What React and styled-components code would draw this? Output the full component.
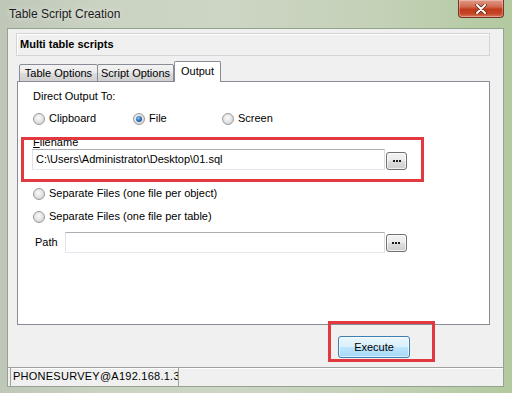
import React from 'react';
import styled, { createGlobalStyle } from 'styled-components';

const Global = createGlobalStyle`
  html, body { margin: 0; padding: 0; }
  body {
    width: 512px; height: 393px; overflow: hidden;
    font-family: "Liberation Sans", Arial, sans-serif;
    font-size: 11px; color: #000;
  }
  #root { width: 512px; height: 393px; }
`;

const Window = styled.div`
  width: 512px; height: 393px; box-sizing: border-box;
  display: flex; flex-direction: column;
  padding: 0 8px 6px 7px;
  background: linear-gradient(90deg, #bfc7b9 0%, #cad2c2 20%, #cdd5c4 45%, #c3d1b6 75%, #b2c99f 100%);
`;

const TitleBar = styled.div`
  height: 28px; flex: none;
  display: flex; align-items: flex-start; justify-content: space-between;
`;

const Title = styled.div`
  margin: 6px 0 0 2px;
  font-size: 12px; line-height: 16px; color: #1c1c1c;
  text-shadow: 0 0 6px rgba(255,255,255,0.8);
`;

const CloseButton = styled.div`
  width: 46px; height: 18px; box-sizing: border-box;
  border: 1px solid #7a3322; border-top: none;
  border-radius: 0 0 4px 4px;
  background: linear-gradient(180deg, #e29a88 0%, #d16a50 40%, #c03a1a 55%, #c44527 80%, #d8795b 100%);
  box-shadow: inset 0 0 0 1px rgba(255,255,255,0.3);
  display: flex; align-items: center; justify-content: center;
`;

const Client = styled.div`
  position: relative;
  flex: 1; display: flex; flex-direction: column;
  background: #f0f0f0;
  border: 1px solid #93a38d;
`;

const Header = styled.div`
  margin: 4px 13px 0 8px; height: 23px; box-sizing: border-box;
  border: 1px solid #d4d4d4;
  box-shadow: inset 1px 1px 0 #ffffff;
  font-weight: bold; line-height: 21px;
  padding-left: 3px;
`;

const TabStrip = styled.div`
  margin: 5px 0 -1px 11px; height: 21px;
  display: flex; align-items: flex-end;
  position: relative; z-index: 1;
`;

const Tab = styled.div`
  box-sizing: border-box;
  width: ${p => p.$w}px;
  height: ${p => (p.$active ? 21 : 18)}px;
  margin-left: ${p => p.$ml || 0}px;
  border: 1px solid #898c95;
  border-bottom: ${p => (p.$active ? 'none' : '1px solid #898c95')};
  border-radius: 2px 2px 0 0;
  background: ${p => (p.$active ? '#ffffff' : 'linear-gradient(180deg, #f3f3f3 0%, #ebebeb 50%, #dddddd 51%, #cfcfcf 100%)')};
  text-align: center;
  line-height: ${p => (p.$active ? 18 : 16)}px;
  color: #000;
`;

const TabPanel = styled.div`
  margin-left: 9px; width: 473px; height: 244px; box-sizing: border-box;
  background: #ffffff;
  border: 1px solid #898c95;
  padding: 8px 0 0 15px;
  display: flex; flex-direction: column;
`;

const Label = styled.div`
  line-height: 13px; height: 13px;
  margin-top: ${p => p.$mt || 0}px;
  margin-left: ${p => p.$ml || 0}px;
`;

const Row = styled.div`
  display: flex; align-items: ${p => p.$align || 'center'};
  margin-top: ${p => p.$mt || 0}px;
`;

const RadioItem = styled.div`
  display: flex; align-items: center;
  width: ${p => (p.$w ? `${p.$w}px` : 'auto')};
  height: 13px; line-height: 13px;
`;

const RadioCircle = styled.span`
  width: 12px; height: 12px; box-sizing: border-box; flex: none;
  border-radius: 50%;
  border: 1px solid #9a9a9a;
  background: radial-gradient(circle at 45% 40%, #fbfbfb 0%, #e6e6e6 45%, #c9c9c9 100%);
  margin-right: 4px;
  display: flex; align-items: center; justify-content: center;
  &::after {
    content: '';
    display: ${p => (p.$checked ? 'block' : 'none')};
    width: 6px; height: 6px; border-radius: 50%;
    background: radial-gradient(circle at 40% 35%, #8cc6f5 0%, #2d6fc1 50%, #163c7a 100%);
  }
`;

const TextBox = styled.div`
  width: ${p => p.$w}px; height: 21px; box-sizing: border-box;
  margin-left: ${p => p.$ml || 0}px;
  border: 1px solid;
  border-color: #abadb3 #dbdfe6 #e3e9ef #e2e3ea;
  background: #fff;
  padding-left: 3px;
  line-height: 19px;
  white-space: nowrap; overflow: hidden;
`;

const DotsButton = styled.div`
  width: 21px; height: 18px; box-sizing: border-box;
  margin-left: 1px;
  border: 1px solid #707070; border-radius: 3px;
  background: linear-gradient(180deg, #f2f2f2 0%, #ebebeb 50%, #dddddd 51%, #cfcfcf 100%);
  box-shadow: inset 0 0 0 1px rgba(255,255,255,0.7);
  display: flex; align-items: center; justify-content: center; gap: 1px;
`;

const Dot = styled.span`
  width: 2px; height: 2px; background: #1a1a1a;
`;

const Footer = styled.div`
  height: 42px; flex: none; box-sizing: border-box;
  padding: 11px 0 0 330px;
`;

const ExecuteButton = styled.div`
  width: 72px; height: 22px; box-sizing: border-box;
  border: 1px solid #3c7fb1; border-radius: 3px;
  background: linear-gradient(180deg, #eaf6fd 0%, #d9f0fc 50%, #bee6fd 51%, #a7d9f5 100%);
  box-shadow: inset 0 0 0 1px rgba(255,255,255,0.6);
  text-align: center; line-height: 20px;
`;

const StatusBar = styled.div`
  flex: 1; display: flex;
  border-top: 1px solid #a0a0a0;
  box-shadow: inset 0 1px 0 #ffffff;
`;

const StatusPanel = styled.div`
  width: 169px; box-sizing: border-box;
  margin-left: 2px;
  border-left: 1px solid #a0a0a0; border-right: 1px solid #a0a0a0;
  padding-left: 2px;
  line-height: 17px;
  white-space: nowrap; overflow: hidden;
  font-size: 11px; letter-spacing: 0.25px;
`;

const Annotation = styled.div`
  position: absolute; box-sizing: border-box;
  left: ${p => p.$x}px; top: ${p => p.$y}px;
  width: ${p => p.$w}px; height: ${p => p.$h}px;
  border: 3px solid #e2383f;
  pointer-events: none;
`;

const Radio = ({ checked, w, children }) => (
  <RadioItem $w={w}>
    <RadioCircle $checked={checked} />
    <span>{children}</span>
  </RadioItem>
);

const Browse = () => (
  <DotsButton>
    <Dot /><Dot /><Dot />
  </DotsButton>
);

export default function App() {
  return (
    <>
      <Global />
      <Window>
        <TitleBar>
          <Title>Table Script Creation</Title>
          <CloseButton>
            <svg width="12" height="10" viewBox="0 0 12 10">
              <path d="M2 1 L10 9 M10 1 L2 9" stroke="#5a2418" strokeWidth="3.4" strokeLinecap="round" />
              <path d="M2 1 L10 9 M10 1 L2 9" stroke="#ffffff" strokeWidth="2" strokeLinecap="round" />
            </svg>
          </CloseButton>
        </TitleBar>
        <Client>
          <Header>Multi table scripts</Header>
          <TabStrip>
            <Tab $w={79}>Table Options</Tab>
            <Tab $w={77} $ml={-1}>Script Options</Tab>
            <Tab $w={47} $ml={0} $active>Output</Tab>
          </TabStrip>
          <TabPanel>
            <Label>Direct Output To:</Label>
            <Row $mt={9}>
              <Radio w={100}>Clipboard</Radio>
              <Radio w={89} checked>File</Radio>
              <Radio>Screen</Radio>
            </Row>
            <Label $mt={11}><u>F</u>ilename</Label>
            <Row $align="flex-end">
              <TextBox $w={353} $ml={-1}>C:\Users\Administrator\Desktop\01.sql</TextBox>
              <Browse />
            </Row>
            <Row $mt={17}>
              <Radio>Separate Files (one file per object)</Radio>
            </Row>
            <Row $mt={10}>
              <Radio>Separate Files (one file per table)</Radio>
            </Row>
            <Row $mt={9}>
              <Label $ml={2}>Path</Label>
              <TextBox $w={320} $ml={7} />
              <Browse />
            </Row>
          </TabPanel>
          <Footer>
            <ExecuteButton>Execute</ExecuteButton>
          </Footer>
          <StatusBar>
            <StatusPanel>PHONESURVEY@A192.168.1.34</StatusPanel>
          </StatusBar>
          <Annotation $x={13} $y={108} $w={403} $h={45} />
          <Annotation $x={320} $y={292} $w={107} $h={41} />
        </Client>
      </Window>
    </>
  );
}
